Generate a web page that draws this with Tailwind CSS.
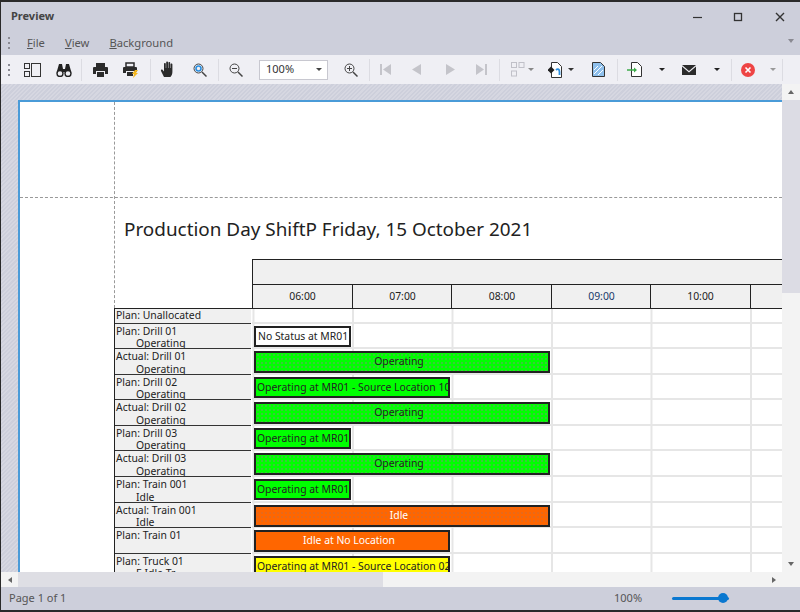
<!DOCTYPE html>
<html><head><meta charset="utf-8"><script src="https://cdn.jsdelivr.net/npm/@tailwindcss/browser@4"></script></head>
<body class="m-0">
<div class="w-[800px] h-[612px] overflow-hidden flex flex-col bg-[#cdcfdb] border-t-2 border-b-2 border-l border-[#2a2a2a] text-[#3a3a3a] font-['Noto_Sans','DejaVu_Sans',sans-serif] text-[12px] box-border">
  <!-- title -->
  <div class="h-[29px] shrink-0 flex items-center pl-[10px]">
    <span class="font-bold text-[11px] text-[#444] flex-1">Preview</span>
    <svg class="w-[110px] h-[14px]" viewBox="0 0 110 14" fill="none" stroke="#333" stroke-width="1.2"><path d="M3 7.5h9"/><rect x="44.5" y="3.5" width="7" height="7" stroke-width="1.3"/><path d="M86 3l8 8M94 3l-8 8" stroke-width="1.4"/></svg>
  </div>
  <!-- menu -->
  <div class="h-[24px] shrink-0 flex items-center pl-[7px] relative text-[11.200px]">
    <svg class="w-[3px] h-[12px]" viewBox="0 0 3 12" fill="#8a8a92"><rect y="0" width="2" height="2"/><rect y="5" width="2" height="2"/><rect y="10" width="2" height="2"/></svg>
    <span class="ml-[16px] text-[#555]"><u>F</u>ile</span>
    <span class="ml-[20px] text-[#555]"><u>V</u>iew</span>
    <span class="ml-[20px] text-[#555]"><u>B</u>ackground</span>
    <svg class="absolute right-[6px] top-[8px] w-[6px] h-[4px]" viewBox="0 0 6 4" fill="#8a8a92"><path d="M0 0h6L3 4z"/></svg>
  </div>
  <!-- toolbar -->
  <div class="h-[29px] shrink-0 bg-[#efeff4] flex items-center relative">
    <svg class="w-[3px] h-[12px] ml-[7px]" viewBox="0 0 3 12" fill="#8a8a92"><rect y="0" width="2" height="2"/><rect y="5" width="2" height="2"/><rect y="10" width="2" height="2"/></svg>
    <svg class="ml-[13px] w-[17px] h-[14px]" viewBox="0 0 17 14" fill="none" stroke="#333"><rect x=".5" y=".5" width="5" height="5"/><rect x=".5" y="8.5" width="5" height="5"/><rect x="7.5" y=".5" width="9" height="13"/></svg>
    <svg class="ml-[15px] w-[16px] h-[14px]" viewBox="0 0 16 14" fill="#222"><path d="M3 1h3l1 5h2l1-5h3l2 7H9v1H7V8H1z"/><circle cx="4" cy="10.5" r="3" fill="#efeff4" stroke="#222" stroke-width="1.4"/><circle cx="12" cy="10.5" r="3" fill="#efeff4" stroke="#222" stroke-width="1.4"/></svg>
    <div class="ml-[9px] w-[1px] h-[22px] bg-[#dcdce2]"></div>
    <svg class="ml-[11px] w-[15px] h-[14px]" viewBox="0 0 15 14" fill="#2b2b2b"><path d="M3 0h9v4H3z"/><path d="M1 4h13a1 1 0 0 1 1 1v6h-3V8H3v3H0V5a1 1 0 0 1 1-1z"/><path d="M4 9h7v5H4z"/></svg>
    <svg class="ml-[15px] w-[16px] h-[16px]" viewBox="0 0 16 16" fill="#2b2b2b"><path d="M3 1h8v4H3z" fill="none" stroke="#2b2b2b" stroke-width="1.5"/><path d="M1 5h12a1 1 0 0 1 1 1v4h-3V9H3v2H0V6a1 1 0 0 1 1-1z"/><path d="M4 10h6v4H4z"/><path d="M12 8l-3 4h2l-1 4 5-5h-2l2-3z" fill="#f5b81f"/></svg>
    <div class="ml-[11px] w-[1px] h-[22px] bg-[#dcdce2]"></div>
    <svg class="ml-[9px] w-[17px] h-[17px]" viewBox="0 0 17 17" fill="#2b2b2b"><path d="M4 16l-3-6c-.5-1 .8-2 1.700-1L4 10.500V3c0-1.300 1.800-1.300 1.800 0v4h.4V1.500c0-1.300 1.800-1.300 1.800 0V7h.4V2c0-1.300 1.800-1.300 1.800 0v5h.4V3.500c0-1.300 1.800-1.300 1.800 0V11c0 2-1 4-2 5z"/></svg>
    <svg class="ml-[16px] w-[14px] h-[14px]" viewBox="0 0 14 14" fill="none"><circle cx="5.500" cy="5.500" r="4.500" stroke="#444"/><circle cx="5.500" cy="5.500" r="2.500" stroke="#2b8fe0" stroke-width="1.600"/><path d="M9 9l4.500 4.500" stroke="#444" stroke-width="1.500"/></svg>
    <div class="ml-[11px] w-[1px] h-[22px] bg-[#dcdce2]"></div>
    <svg class="ml-[10px] w-[14px] h-[14px]" viewBox="0 0 14 14" fill="none" stroke="#444"><circle cx="5.500" cy="5.500" r="4.500"/><path d="M3 5.500h5"/><path d="M9 9l4.500 4.500" stroke-width="1.500"/></svg>
    <div class="ml-[16px] w-[69px] h-[20px] bg-white border border-[#c8c8d0] flex items-center pl-[6px] pr-[5px] text-[11px] text-[#333]"><span class="flex-1">100%</span><svg class="w-[6px] h-[3px]" viewBox="0 0 6 3" fill="#444"><path d="M0 0h6L3 3z"/></svg></div>
    <svg class="ml-[16px] w-[14px] h-[14px]" viewBox="0 0 14 14" fill="none" stroke="#444"><circle cx="5.500" cy="5.500" r="4.500"/><path d="M3 5.500h5M5.500 3v5"/><path d="M9 9l4.500 4.500" stroke-width="1.500"/></svg>
    <div class="ml-[11px] w-[1px] h-[22px] bg-[#dcdce2]"></div>
    <svg class="ml-[10px] w-[11px] h-[11px]" viewBox="0 0 11 11" fill="#c4c4ca"><path d="M0 0h2v11H0zM11 0v11L3 5.500z"/></svg>
    <svg class="ml-[21px] w-[9px] h-[11px]" viewBox="0 0 9 11" fill="#c4c4ca"><path d="M9 0v11L0 5.500z"/></svg>
    <svg class="ml-[25px] w-[9px] h-[11px]" viewBox="0 0 9 11" fill="#c4c4ca"><path d="M0 0v11l9-5.500z"/></svg>
    <svg class="ml-[21px] w-[11px] h-[11px]" viewBox="0 0 11 11" fill="#c4c4ca"><path d="M11 0H9v11h2zM0 0v11l8-5.500z"/></svg>
    <div class="ml-[12px] w-[1px] h-[22px] bg-[#dcdce2]"></div>
    <svg class="ml-[11px] w-[14px] h-[15px]" viewBox="0 0 14 15" fill="none" stroke="#c0c0c8"><rect x=".5" y=".5" width="5" height="5"/><rect x="8" y=".5" width="5" height="5"/><rect x=".5" y="9" width="5" height="5"/></svg>
    <svg class="ml-[3px] w-[6px] h-[3px]" viewBox="0 0 6 3" fill="#888"><path d="M0 0h6L3 3z"/></svg>
    <svg class="ml-[14px] w-[14px] h-[16px]" viewBox="0 0 14 16" fill="none"><path d="M3.500 .5h6l4 4v11h-10z" fill="#fff" stroke="#333"/><path d="M3 4.500l3.500 3.500L3 11.500-.5 8z" fill="#222"/><path d="M8 8c2-2 3.500-.5 3.500 2v3" stroke="#2b8fe0" stroke-width="1.800"/></svg>
    <svg class="ml-[6px] w-[6px] h-[3px]" viewBox="0 0 6 3" fill="#333"><path d="M0 0h6L3 3z"/></svg>
    <svg class="ml-[18px] w-[13px] h-[15px]" viewBox="0 0 13 15"><path d="M.5.500h8l4 4v10H.5z" fill="#8fc0ec" stroke="#333"/><path d="M2 12l8-8M2 8l4-4M6 13l5-5" stroke="#fff"/></svg>
    <div class="ml-[12px] w-[1px] h-[22px] bg-[#dcdce2]"></div>
    <svg class="ml-[9px] w-[15px] h-[15px]" viewBox="0 0 15 15" fill="none"><path d="M4.500 .5h6l4 4v10h-10z" fill="#fff" stroke="#333"/><path d="M0 8h8" stroke="#3cab4a" stroke-width="1.500"/><path d="M7 5.500L10 8l-3 2.500z" fill="#3cab4a"/></svg>
    <svg class="ml-[17px] w-[6px] h-[3px]" viewBox="0 0 6 3" fill="#222"><path d="M0 0h6L3 3z"/></svg>
    <svg class="ml-[17px] w-[14px] h-[10px]" viewBox="0 0 14 10" fill="#2b2b2b"><path d="M0 0h14L7 6z"/><path d="M0 1.500V10h14V1.500L7 7.500z"/></svg>
    <svg class="ml-[18px] w-[6px] h-[3px]" viewBox="0 0 6 3" fill="#222"><path d="M0 0h6L3 3z"/></svg>
    <div class="ml-[11px] w-[1px] h-[22px] bg-[#dcdce2]"></div>
    <svg class="ml-[9px] w-[14px] h-[14px]" viewBox="0 0 14 14"><circle cx="7" cy="7" r="7" fill="#ee4444"/><path d="M4.500 4.500l5 5M9.500 4.500l-5 5" stroke="#fff" stroke-width="1.600"/></svg>
    <svg class="ml-[15px] w-[6px] h-[3px]" viewBox="0 0 6 3" fill="#999"><path d="M0 0h6L3 3z"/></svg>
    <div class="ml-[6px] w-[1px] h-[22px] bg-[#dcdce2]"></div>
  </div>
  <!-- canvas + scroll -->
  <div class="flex-1 min-h-0 flex">
    <div class="w-[781px] pl-[17px] pt-[16px] bg-[repeating-linear-gradient(135deg,#cdcfdb_0_1.500px,#d6d7e1_1.500px_3px)] overflow-hidden">
      <div class="h-[480px] bg-white border-t-2 border-l-2 border-[#4a9bd8] relative overflow-hidden text-[#222]">
        <div class="absolute left-[94px] top-0 h-[206px] border-l border-dashed border-[#999]"></div>
        <div class="absolute left-0 right-0 top-[95px] border-t border-dashed border-[#999]"></div>
        <div class="h-[113px]"></div>
        <div class="h-[44px] pl-[104px] text-[18.900px] leading-[28px] text-[#222]">Production Day ShiftP Friday, 15 October 2021</div>
        <!-- header -->
        <div class="ml-[232px] h-[25px] bg-[#f0f0f0] border-t border-l border-[#222]"></div>
        <div class="ml-[232px] h-[24px] bg-[#f0f0f0] border-t border-l border-[#222] flex text-[10.400px] leading-[22px] text-center">
          <div class="w-[100px] shrink-0 border-r border-[#222]">06:00</div>
          <div class="w-[99px] shrink-0 border-r border-[#222] pl-[1px]">07:00</div>
          <div class="w-[100px] shrink-0 border-r border-[#222] pl-[1px]">08:00</div>
          <div class="w-[99px] shrink-0 border-r border-[#222] pl-[1px] text-[#1a3a6a]">09:00</div>
          <div class="w-[100px] shrink-0 border-r border-[#222]">10:00</div>
          <div class="flex-1"></div>
        </div>
        <!-- rows -->
        <div class="ml-[94px] border-t border-l border-[#222] text-[10.400px]">
          <div class="flex h-[14.500px]"><div class="w-[136px] mr-[1px] shrink-0 bg-[#f0f0f0] border-b border-[#333] leading-[13px] pl-[1px] overflow-hidden">Plan: Unallocated</div><div class="flex-1 border-b-2 border-[#e6e6e6] bg-[linear-gradient(90deg,#e6e6e6_2px,transparent_2px)] bg-[length:99.500px_100%] bg-[position:100px_0]"></div></div>

          <div class="flex h-[25.600px]"><div class="w-[136px] mr-[1px] shrink-0 bg-[#f0f0f0] border-b border-[#333] leading-[12.500px] pl-[1px] pt-[1px] overflow-hidden">Plan: Drill 01<br><span class="pl-[20px]">Operating</span></div><div class="flex-1 relative border-b-2 border-[#e6e6e6] bg-[linear-gradient(90deg,#e6e6e6_2px,transparent_2px)] bg-[length:99.500px_100%] bg-[position:100px_0]"><div class="absolute left-[2px] top-[2px] w-[97px] h-[21px] bg-white border-2 border-[#222] leading-[17px] pl-[2px] whitespace-nowrap overflow-hidden">No Status at MR01</div></div></div>

          <div class="flex h-[25.600px]"><div class="w-[136px] mr-[1px] shrink-0 bg-[#f0f0f0] border-b border-[#333] leading-[12.500px] pl-[1px] pt-[1px] overflow-hidden">Actual: Drill 01<br><span class="pl-[20px]">Operating</span></div><div class="flex-1 relative border-b-2 border-[#e6e6e6] bg-[linear-gradient(90deg,#e6e6e6_2px,transparent_2px)] bg-[length:99.500px_100%] bg-[position:100px_0]"><div class="absolute left-[2px] top-[2px] w-[296px] h-[22px] bg-[#00ff00] bg-[radial-gradient(#3fc63f_0.700px,transparent_0.800px)] bg-[length:4px_4px] border-2 border-[#222] leading-[16px] text-center pr-[6px] whitespace-nowrap overflow-hidden">Operating</div></div></div>

          <div class="flex h-[25.600px]"><div class="w-[136px] mr-[1px] shrink-0 bg-[#f0f0f0] border-b border-[#333] leading-[12.500px] pl-[1px] pt-[1px] overflow-hidden">Plan: Drill 02<br><span class="pl-[20px]">Operating</span></div><div class="flex-1 relative border-b-2 border-[#e6e6e6] bg-[linear-gradient(90deg,#e6e6e6_2px,transparent_2px)] bg-[length:99.500px_100%] bg-[position:100px_0]"><div class="absolute left-[2px] top-[2px] w-[196px] h-[21px] bg-[#00ff00] border-2 border-[#222] leading-[17px] pl-[1px] whitespace-nowrap overflow-hidden">Operating at MR01 - Source Location 10</div></div></div>

          <div class="flex h-[25.600px]"><div class="w-[136px] mr-[1px] shrink-0 bg-[#f0f0f0] border-b border-[#333] leading-[12.500px] pl-[1px] pt-[1px] overflow-hidden">Actual: Drill 02<br><span class="pl-[20px]">Operating</span></div><div class="flex-1 relative border-b-2 border-[#e6e6e6] bg-[linear-gradient(90deg,#e6e6e6_2px,transparent_2px)] bg-[length:99.500px_100%] bg-[position:100px_0]"><div class="absolute left-[2px] top-[2px] w-[296px] h-[22px] bg-[#00ff00] bg-[radial-gradient(#3fc63f_0.700px,transparent_0.800px)] bg-[length:4px_4px] border-2 border-[#222] leading-[16px] text-center pr-[6px] whitespace-nowrap overflow-hidden">Operating</div></div></div>

          <div class="flex h-[25.600px]"><div class="w-[136px] mr-[1px] shrink-0 bg-[#f0f0f0] border-b border-[#333] leading-[12.500px] pl-[1px] pt-[1px] overflow-hidden">Plan: Drill 03<br><span class="pl-[20px]">Operating</span></div><div class="flex-1 relative border-b-2 border-[#e6e6e6] bg-[linear-gradient(90deg,#e6e6e6_2px,transparent_2px)] bg-[length:99.500px_100%] bg-[position:100px_0]"><div class="absolute left-[2px] top-[2px] w-[97px] h-[21px] bg-[#00ff00] border-2 border-[#222] leading-[17px] pl-[1px] whitespace-nowrap overflow-hidden">Operating at MR01</div></div></div>

          <div class="flex h-[25.600px]"><div class="w-[136px] mr-[1px] shrink-0 bg-[#f0f0f0] border-b border-[#333] leading-[12.500px] pl-[1px] pt-[1px] overflow-hidden">Actual: Drill 03<br><span class="pl-[20px]">Operating</span></div><div class="flex-1 relative border-b-2 border-[#e6e6e6] bg-[linear-gradient(90deg,#e6e6e6_2px,transparent_2px)] bg-[length:99.500px_100%] bg-[position:100px_0]"><div class="absolute left-[2px] top-[2px] w-[296px] h-[22px] bg-[#00ff00] bg-[radial-gradient(#3fc63f_0.700px,transparent_0.800px)] bg-[length:4px_4px] border-2 border-[#222] leading-[16px] text-center pr-[6px] whitespace-nowrap overflow-hidden">Operating</div></div></div>

          <div class="flex h-[25.600px]"><div class="w-[136px] mr-[1px] shrink-0 bg-[#f0f0f0] border-b border-[#333] leading-[12.500px] pl-[1px] pt-[1px] overflow-hidden">Plan: Train 001<br><span class="pl-[20px]">Idle</span></div><div class="flex-1 relative border-b-2 border-[#e6e6e6] bg-[linear-gradient(90deg,#e6e6e6_2px,transparent_2px)] bg-[length:99.500px_100%] bg-[position:100px_0]"><div class="absolute left-[2px] top-[2px] w-[97px] h-[21px] bg-[#00ff00] border-2 border-[#222] leading-[17px] pl-[1px] whitespace-nowrap overflow-hidden">Operating at MR01</div></div></div>

          <div class="flex h-[25.600px]"><div class="w-[136px] mr-[1px] shrink-0 bg-[#f0f0f0] border-b border-[#333] leading-[12.500px] pl-[1px] pt-[1px] overflow-hidden">Actual: Train 001<br><span class="pl-[20px]">Idle</span></div><div class="flex-1 relative border-b-2 border-[#e6e6e6] bg-[linear-gradient(90deg,#e6e6e6_2px,transparent_2px)] bg-[length:99.500px_100%] bg-[position:100px_0]"><div class="absolute left-[2px] top-[2px] w-[296px] h-[22px] bg-[#ff6600] bg-[radial-gradient(#e66a1c_0.700px,transparent_0.800px)] bg-[length:4px_4px] border-2 border-[#222] leading-[16px] text-center pr-[6px] text-white whitespace-nowrap overflow-hidden">Idle</div></div></div>

          <div class="flex h-[25.600px]"><div class="w-[136px] mr-[1px] shrink-0 bg-[#f0f0f0] border-b border-[#333] leading-[12.500px] pl-[1px] pt-[1px] overflow-hidden">Plan: Train 01</div><div class="flex-1 relative border-b-2 border-[#e6e6e6] bg-[linear-gradient(90deg,#e6e6e6_2px,transparent_2px)] bg-[length:99.500px_100%] bg-[position:100px_0]"><div class="absolute left-[2px] top-[2px] w-[196px] h-[22px] bg-[#ff6600] border-2 border-[#222] leading-[16px] text-center pr-[6px] text-white whitespace-nowrap overflow-hidden">Idle at No Location</div></div></div>

          <div class="flex h-[25.600px]"><div class="w-[136px] mr-[1px] shrink-0 bg-[#f0f0f0] border-b border-[#333] leading-[12.500px] pl-[1px] pt-[1px] overflow-hidden">Plan: Truck 01<br><span class="pl-[20px]">E Idle Tr</span></div><div class="flex-1 relative border-b-2 border-[#e6e6e6] bg-[linear-gradient(90deg,#e6e6e6_2px,transparent_2px)] bg-[length:99.500px_100%] bg-[position:100px_0]"><div class="absolute left-[2px] top-[2px] w-[196px] h-[22px] bg-[#ffff00] border-2 border-[#222] leading-[16px] pl-[1px] whitespace-nowrap overflow-hidden">Operating at MR01 - Source Location 02</div></div></div>
        </div>
      </div>
    </div>
    <div class="flex-1 bg-[#f3f3f3] flex flex-col items-center relative">
      <div class="h-[16px] w-full flex items-center justify-center"><svg class="w-[6px] h-[4px]" viewBox="0 0 6 4" fill="#666"><path d="M3 0l3 4H0z"/></svg></div>
      <div class="h-[193px] w-full bg-[#dcdce4]"></div>
      <div class="flex-1"></div>
      <div class="h-[16px] w-full flex items-center justify-center"><svg class="w-[6px] h-[4px]" viewBox="0 0 6 4" fill="#666"><path d="M0 0h6L3 4z"/></svg></div>
    </div>
  </div>
  <!-- h scroll -->
  <div class="h-[15px] shrink-0 bg-[#f3f3f3] flex items-center">
    <svg class="ml-[7px] w-[4px] h-[6px]" viewBox="0 0 4 6" fill="#666"><path d="M4 0v6L0 3z"/></svg>
    <div class="ml-[6px] w-[365px] h-full bg-[#dedee4]"></div>
    <div class="flex-1"></div>
    <svg class="mr-[24px] w-[4px] h-[6px]" viewBox="0 0 4 6" fill="#666"><path d="M0 0v6l4-3z"/></svg>
  </div>
  <!-- status -->
  <div class="h-[23px] shrink-0 flex items-center pl-[8px] text-[#555] text-[11px] relative">
    <span class="flex-1">Page 1 of 1</span>
    <span class="w-[58px]">100%</span>
    <div class="w-[57px] h-[3px] bg-[#0a78d0] rounded-full relative mr-[71px]"><div class="absolute right-[1px] -top-[4px] w-[10px] h-[10px] rounded-full bg-[#0a78d0]"></div></div>
  </div>
</div>
</body></html>
